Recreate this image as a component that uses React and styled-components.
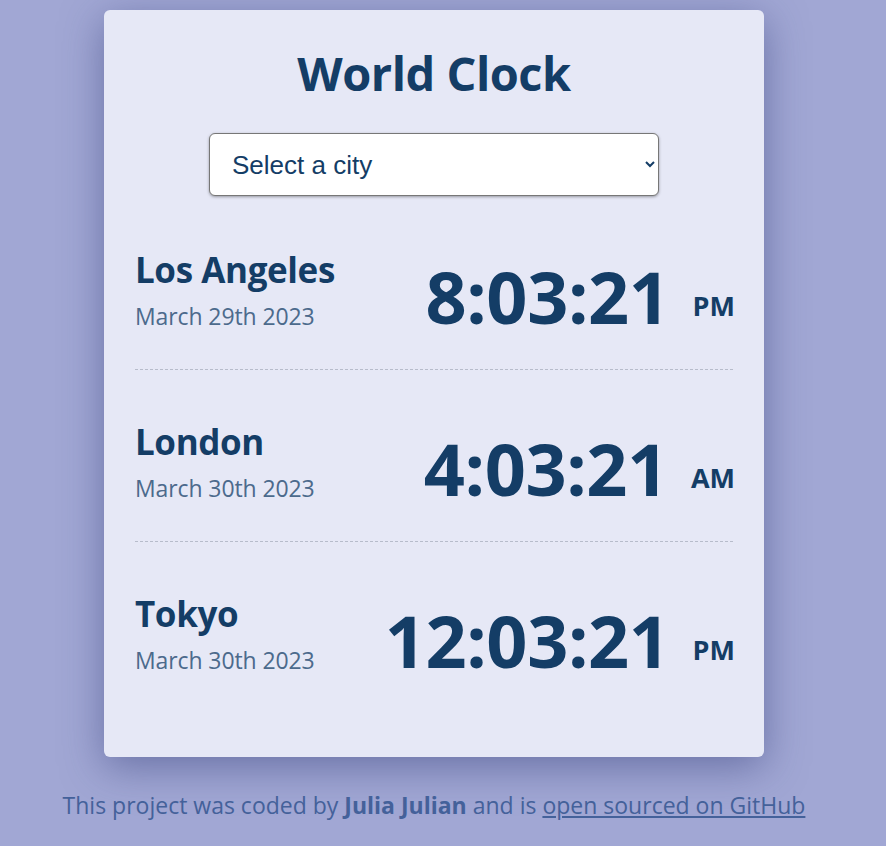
import React from "react";
import styled, { createGlobalStyle } from "styled-components";

const GlobalStyle = createGlobalStyle`
  body {
    margin: 0;
    padding-right: 18px;
    background: #a1a7d4;
    font-family: "Open Sans", "Noto Sans", sans-serif;
  }
`;

const Page = styled.div`
  display: flex;
  flex-direction: column;
  align-items: center;
  padding-top: 10px;
`;

const Card = styled.div`
  width: 660px;
  background: #e6e8f6;
  border-radius: 6px;
  box-shadow: 0 10px 40px rgba(50, 60, 120, 0.5);
  padding: 35px 31px 30px;
  height: 747px;
  box-sizing: border-box;
`;

const Title = styled.h1`
  margin: 0;
  text-align: center;
  font-size: 47px;
  font-weight: 700;
  color: #143d66;
  line-height: 1.2;
  letter-spacing: -0.5px;
`;

const SelectWrap = styled.div`
  display: flex;
  justify-content: center;
  margin-top: 32px;
`;

const Select = styled.select`
  width: 450px;
  height: 63px;
  border-radius: 6px;
  border: 1px solid #777;
  background: #fff;
  box-shadow: 0 1px 3px rgba(0, 0, 0, 0.35);
  font-family: "Liberation Sans", Arial, sans-serif;
  font-size: 26px;
  color: #143d66;
  padding: 0 18px;
`;

const List = styled.div`
  margin-top: 53px;
`;

const Row = styled.div`
  display: flex;
  justify-content: space-between;
  align-items: center;
  padding: 0 0 37px;
  border-bottom: ${(p) => (p.last ? "none" : "1px dashed #b7bccb")};
  & + & {
    padding-top: 51px;
  }
`;

const CityInfo = styled.div`
  display: flex;
  flex-direction: column;
`;

const CityName = styled.div`
  font-size: 35px;
  font-weight: 700;
  color: #143d66;
  line-height: 1.2;
  letter-spacing: -0.4px;
`;

const CityDate = styled.div`
  font-size: 23px;
  color: #4c6a8c;
  margin-top: 9px;
  letter-spacing: -0.1px;
`;

const TimeBox = styled.div`
  display: flex;
  align-items: baseline;
  color: #143d66;
  margin-top: 10px;
  margin-right: -2px;
`;

const Time = styled.div`
  font-size: 72px;
  font-weight: 700;
  letter-spacing: -0.4px;
  line-height: 1;
`;

const Meridiem = styled.span`
  font-size: 27px;
  font-weight: 700;
  margin-left: 23px;
  position: relative;
  top: -8px;
`;

const Footer = styled.div`
  text-align: center;
  white-space: nowrap;
  margin-top: 32px;
  font-size: 23px;
  color: #44619a;

  a {
    color: #44619a;
  }
`;

const cities = [
  { name: "Los Angeles", date: "March 29th 2023", time: "8:03:21", ampm: "PM" },
  { name: "London", date: "March 30th 2023", time: "4:03:21", ampm: "AM" },
  { name: "Tokyo", date: "March 30th 2023", time: "12:03:21", ampm: "PM" },
];

export default function App() {
  return (
    <>
      <GlobalStyle />
      <Page>
        <Card>
          <Title>World Clock</Title>
          <SelectWrap>
            <Select defaultValue="">
              <option value="">Select a city</option>
            </Select>
          </SelectWrap>
          <List>
            {cities.map((c, i) => (
              <Row key={c.name} last={i === cities.length - 1}>
                <CityInfo>
                  <CityName>{c.name}</CityName>
                  <CityDate>{c.date}</CityDate>
                </CityInfo>
                <TimeBox>
                  <Time>{c.time}</Time>
                  <Meridiem>{c.ampm}</Meridiem>
                </TimeBox>
              </Row>
            ))}
          </List>
        </Card>
        <Footer>
          This project was coded by <strong>Julia Julian</strong> and is{" "}
          <a href="#">open sourced on GitHub</a>
        </Footer>
      </Page>
    </>
  );
}
